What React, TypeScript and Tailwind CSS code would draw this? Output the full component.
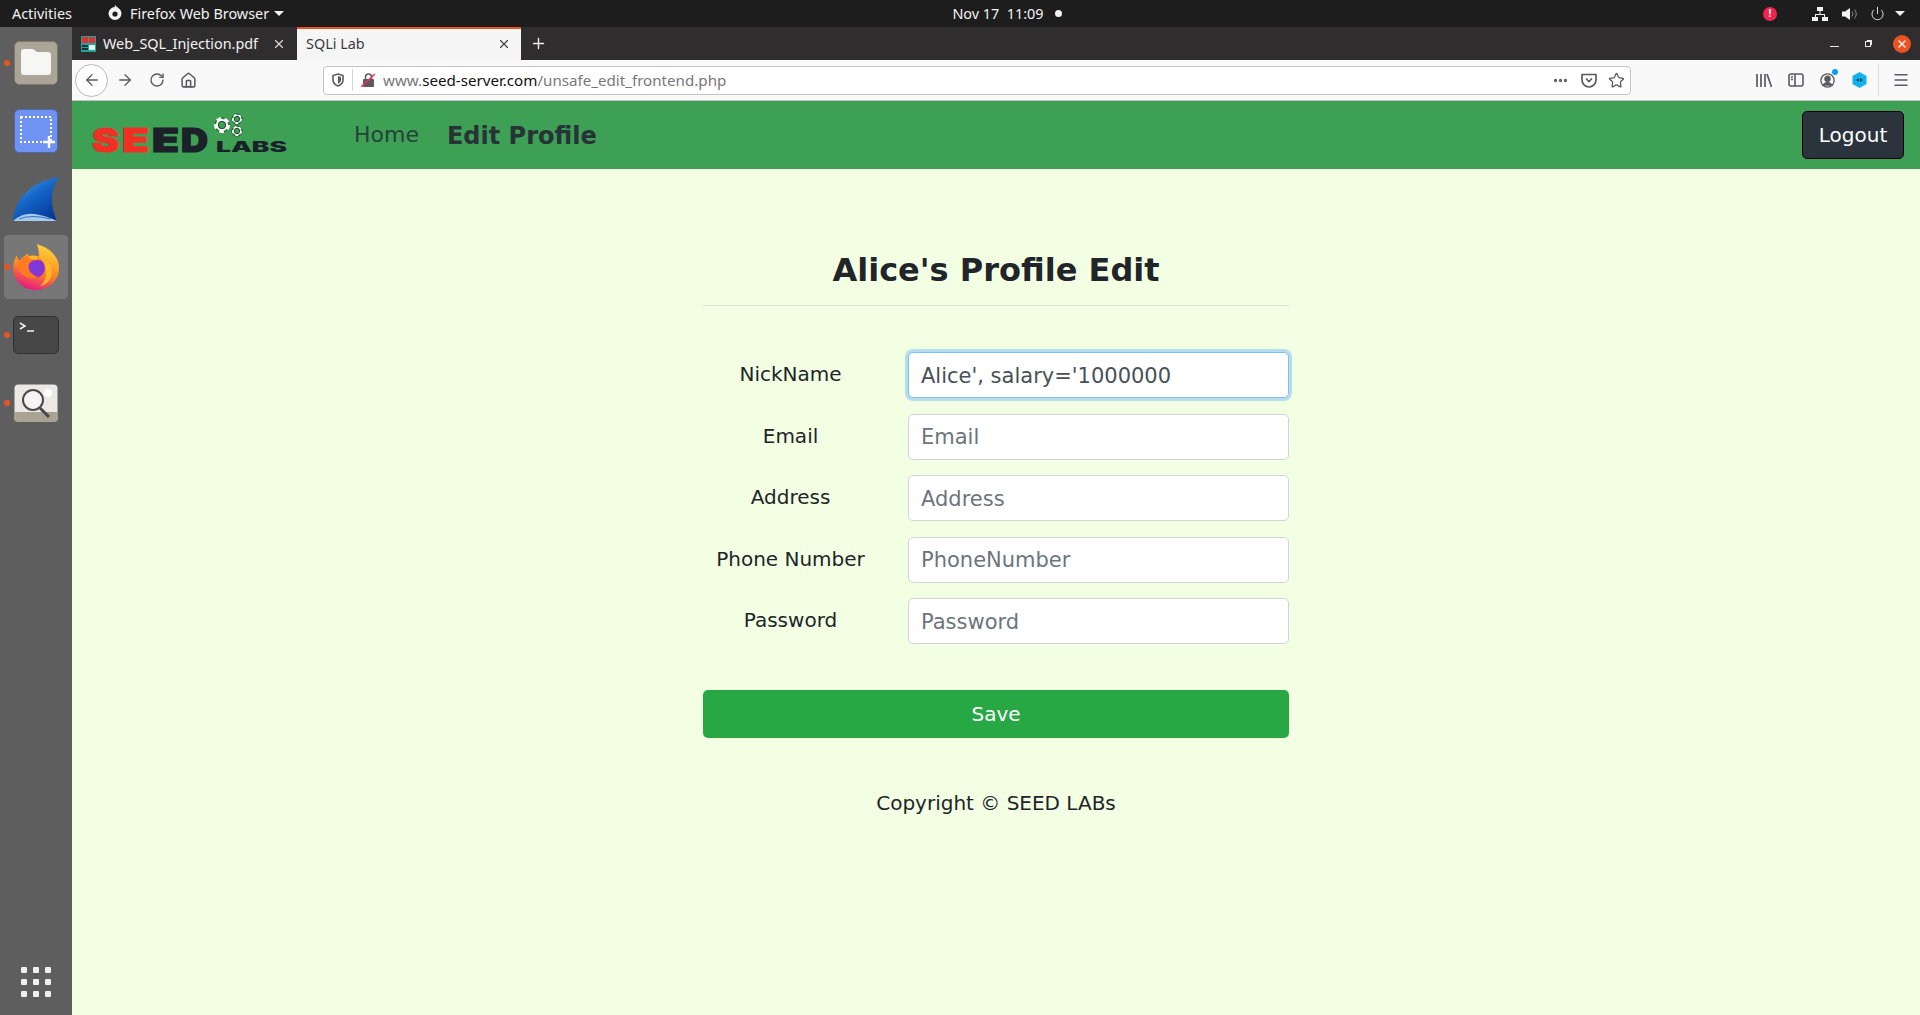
import { ArrowLeft, ArrowRight, Ellipsis, House, Menu, Plus, Power, RotateCw, Star, X } from 'lucide-react'

const dejavu = 'font-["DejaVu_Sans",sans-serif]'

const Dock = ({ dot, active, children }: { dot?: boolean; active?: boolean; children: React.ReactNode }) => (
  <div className="relative flex h-[68px] items-center justify-center">
    {active && <div className="absolute left-[4px] top-[2px] h-[64px] w-[64px] rounded bg-[#777777]" />}
    {dot && <div className="absolute left-[4px] top-[31px] h-[6px] w-[6px] rounded-full bg-[#e95420]" />}
    <div className="relative">{children}</div>
  </div>
)

const FilesIcon = () => (
  <svg width="44" height="44" viewBox="0 0 44 44" className="block">
    <rect x="0.5" y="0.5" width="43" height="43" rx="5" fill="#aba597" stroke="#7d786d" />
    <path d="M7 11q0-3 3-3h9l4 3h11q3 0 3 3v17q0 3-3 3H10q-3 0-3-3z" fill="#f7f6f4" />
  </svg>
)

const ScreenshotIcon = () => (
  <svg width="44" height="44" viewBox="0 0 44 44" className="block">
    <rect x="0.5" y="0.5" width="43" height="43" rx="5" fill="#6f93f2" stroke="#4d68ad" />
    <rect x="7" y="8" width="30" height="25" fill="none" stroke="#fff" strokeWidth="2" strokeDasharray="2 2" />
    <path d="M35 27v12M29 33h12" stroke="#fff" strokeWidth="2.400" />
  </svg>
)

const WiresharkIcon = () => (
  <svg width="46" height="46" viewBox="0 0 46 46" className="block">
    <defs>
      <linearGradient id="fin" x1="0" y1="0" x2="0.7" y2="1">
        <stop offset="0" stopColor="#5aa7ee" />
        <stop offset="0.5" stopColor="#1466c8" />
        <stop offset="1" stopColor="#063a9a" />
      </linearGradient>
    </defs>
    <path d="M0 45C1 24 18 5 46 1 37 14 37 30 44 45z" fill="url(#fin)" />
    <path d="M0 45q10-9 22-7t22 7z" fill="#a9c9ea" />
    <path d="M6 43q12-5 32 0" fill="none" stroke="#2f75c6" />
  </svg>
)

const FirefoxIcon = () => (
  <svg width="46" height="46" viewBox="0 0 46 46" className="block">
    <defs>
      <linearGradient id="ffa" x1="0.7" y1="0" x2="0.35" y2="1">
        <stop offset="0" stopColor="#ffd63c" />
        <stop offset="0.55" stopColor="#ff8a1f" />
        <stop offset="1" stopColor="#e31587" />
      </linearGradient>
      <radialGradient id="ffb" cx="0.55" cy="0.5" r="0.6">
        <stop offset="0" stopColor="#6a3fe0" />
        <stop offset="1" stopColor="#a32cc4" />
      </radialGradient>
    </defs>
    <path d="M23 46C10 46 0 36 0 24 0 19 2 14 4 11q0 4 3 6c2-4 5-6 9-7-1 2-1 3 0 4 6-2 8 0 9 1C27 9 25 4 24 0c8 3 14 6 18 12 3 4 4 8 4 12 0 12-10 22-23 22z" fill="url(#ffa)" />
    <path d="M28 12c9 4 13 13 10 21-2 5-6 8-11 9 7-5 9-17 1-30z" fill="#ffb52a" />
    <circle cx="22" cy="24" r="10" fill="url(#ffb)" />
    <path d="M6 17c3-4 8-6 13-5 4 0 8 2 10 5-5-2-11-1-13 3-2 5 2 11 9 13-7 3-15 0-18-6-2-3-2-7-1-10z" fill="#ff7b21" />
    <path d="M15 13c3-2 8-2 11 0l-3 3c-3-1-6-1-8-3z" fill="#ffb52a" />
  </svg>
)

const TerminalIcon = () => (
  <svg width="46" height="38" viewBox="0 0 46 38" className="block">
    <rect x="0.5" y="0.5" width="45" height="37" rx="5" fill="#474747" stroke="#2e2e2e" />
    <path d="M7 7l5 3-5 3" fill="none" stroke="#f2f2f2" strokeWidth="1.500" />
    <path d="M14 15h7" stroke="#f2f2f2" strokeWidth="1.500" />
  </svg>
)

const SearchIcon = () => (
  <svg width="44" height="38" viewBox="0 0 44 38" className="block">
    <rect x="0.5" y="0.5" width="43" height="37" rx="4" fill="#ece9e4" />
    <path d="M0 28h44v6q0 4-4 4H4q-4 0-4-4z" fill="#a9a393" />
    <circle cx="34" cy="9" r="4" fill="#fff" />
    <circle cx="19" cy="16" r="10" fill="#f5f4f2" stroke="#4a4a4a" strokeWidth="2" />
    <path d="M26 24l9 9" stroke="#4a4a4a" strokeWidth="3" />
  </svg>
)

const PdfFavicon = () => (
  <svg width="15" height="16" viewBox="0 0 15 16">
    <rect width="15" height="16" fill="#2aa198" />
    <rect x="1" y="1" width="6" height="6" fill="#e0312a" />
    <rect x="8" y="1" width="6" height="6" fill="#e0312a" />
    <rect x="1" y="9" width="6" height="2" fill="#17343a" />
    <rect x="8" y="9" width="6" height="5" fill="#d8f2ee" />
    <rect x="1" y="12" width="6" height="2" fill="#17343a" />
  </svg>
)

const Gear = ({ x, y, r, thick }: { x: number; y: number; r: number; thick: number }) => (
  <g>
    <circle cx={x} cy={y} r={r + 1.2} fill="none" stroke="#24282c" strokeWidth="0.6" />
    <circle cx={x} cy={y} r={r} fill="none" stroke="#fff" strokeWidth={thick} strokeDasharray={`${r * 0.7} ${r * 0.55}`} />
    <circle cx={x} cy={y} r={r - thick / 4} fill="none" stroke="#fff" strokeWidth={thick / 2} />
    <circle cx={x} cy={y} r={r - thick / 2 - 0.3} fill="none" stroke="#24282c" strokeWidth="0.8" />
  </g>
)

const seedLetters = [
  { ch: 'S', x: 0, fill: '#ee3124' },
  { ch: 'E', x: 30, fill: '#ee3124' },
  { ch: 'E', x: 60, fill: '#1b2029' },
  { ch: 'D', x: 89, fill: '#1b2029' },
]

const SeedLogo = () => (
  <svg width="200" height="50" viewBox="0 0 200 50" className="shrink-0" style={{ fontFamily: 'Inter, sans-serif' }}>
    {seedLetters.map((l, i) => (
      <text key={i} x={l.x} y="42" fill={l.fill} stroke={l.fill} strokeWidth="1.200" fontSize="33" fontWeight="900" textLength="27" lengthAdjust="spacingAndGlyphs">{l.ch}</text>
    ))}
    <text x="124" y="42" fill="#1b2029" fontSize="14" fontWeight="900" textLength="71" lengthAdjust="spacingAndGlyphs">LABS</text>
    <Gear x={130} y={15} r={6} thick={4} />
    <Gear x={145} y={9} r={4} thick={2} />
    <Gear x={145} y={21} r={4} thick={2} />
  </svg>
)

const fields = [
  { label: 'NickName', placeholder: 'NickName', value: "Alice', salary='1000000", focused: true },
  { label: 'Email', placeholder: 'Email' },
  { label: 'Address', placeholder: 'Address' },
  { label: 'Phone Number', placeholder: 'PhoneNumber' },
  { label: 'Password', placeholder: 'Password' },
]

export default function App() {
  return (
    <div className='flex h-[1015px] w-[1920px] flex-col overflow-hidden font-["Noto_Sans",sans-serif]'>
      {/* gnome top bar */}
      <div className="grid h-[27px] shrink-0 grid-cols-[1fr_auto_1fr] items-center bg-[#1d1d1d] text-[14.400px] text-[#f2f2f2]">
        <div className="flex items-center">
          <span className="ml-[12px]">Activities</span>
          <svg className="ml-[35px]" width="16" height="16" viewBox="0 0 16 16">
            <circle cx="8" cy="8.500" r="6.500" fill="#f2f2f2" />
            <circle cx="8" cy="9" r="2.600" fill="#1d1d1d" />
            <path d="M8 0l3 3-4 2z" fill="#f2f2f2" />
          </svg>
          <span className="ml-[7px]">Firefox Web Browser</span>
          <span className="ml-[5px] h-0 w-0 border-x-[5px] border-t-[5px] border-x-transparent border-t-[#f2f2f2]" />
        </div>
        <div className="flex items-center pl-[94px]">
          <span className="whitespace-pre">Nov 17  11:09</span>
          <span className="ml-[11px] h-[7px] w-[7px] rounded-full bg-[#f2f2f2]" />
        </div>
        <div className="flex items-center justify-end">
          <span className="flex h-[14px] w-[14px] items-center justify-center rounded-full bg-[#ed254e] text-[10px] font-bold text-white">!</span>
          <svg className="ml-[35px]" width="16" height="14" viewBox="0 0 16 14" fill="#f2f2f2">
            <rect x="5" y="0" width="6" height="4" />
            <rect x="0" y="10" width="6" height="4" />
            <rect x="10" y="10" width="6" height="4" />
            <path d="M7.500 4h1v3H13v3h-1V8H4v2H3V7h4.500z" />
          </svg>
          <svg className="ml-[14px]" width="16" height="14" viewBox="0 0 16 14">
            <path d="M0 4.500h3L8 1v12L3 9.500H0z" fill="#f2f2f2" />
            <path d="M10 4.500q2 2.500 0 5M12.500 2.500q3.500 4.500 0 9" fill="none" stroke="#8d8d8d" />
          </svg>
          <Power className="ml-[12px] text-[#f2f2f2]" size={15} strokeWidth={1.4} />
          <span className="ml-[10px] mr-[15px] h-0 w-0 border-x-[5px] border-t-[5px] border-x-transparent border-t-[#f2f2f2]" />
        </div>
      </div>

      <div className="flex min-h-0 flex-1">
        {/* dock */}
        <aside className="flex w-[72px] shrink-0 flex-col justify-between bg-[#5e5e5e] pt-[2px]">
          <div>
            <Dock dot><FilesIcon /></Dock>
            <Dock><ScreenshotIcon /></Dock>
            <Dock><WiresharkIcon /></Dock>
            <Dock dot active><FirefoxIcon /></Dock>
            <Dock dot><TerminalIcon /></Dock>
            <Dock dot><SearchIcon /></Dock>
          </div>
          <div className="mb-[18px] ml-[21px] grid w-[30px] grid-cols-3 gap-[6px]">
            {Array.from({ length: 9 }).map((_, i) => (
              <span key={i} className="h-[6px] w-[6px] rounded-[1px] bg-[#f0f0f0]" />
            ))}
          </div>
        </aside>

        <div className="flex min-w-0 flex-1 flex-col">
          {/* tab strip */}
          <div className="flex h-[33px] shrink-0 items-stretch bg-[#2f2d2e] text-[14.400px]">
            <div className="flex w-[225px] items-center pl-[9px] text-[#f2f2f2]">
              <PdfFavicon />
              <span className="ml-[7px]">Web_SQL_Injection.pdf</span>
              <X className="ml-auto mr-[11px] text-[#d6d6d6]" size={14} />
            </div>
            <div className="flex w-[224px] items-center border-t-2 border-[#e95420] bg-[#f5f5f5] pb-[2px] pl-[9px] text-[#3a3a3a]">
              <span>SQLi Lab</span>
              <X className="ml-auto mr-[10px] text-[#444444]" size={14} />
            </div>
            <Plus className="ml-[9px] self-center text-[#eeeeee]" size={17} />
            <div className="ml-auto flex items-center">
              <span className="mr-[26px] mt-[5px] h-[1px] w-[9px] bg-[#e8e8e8]" />
              <span className="relative mr-[22px] h-[6px] w-[6px] border border-[#e8e8e8] shadow-[1.500px_-1.500px_0_-0.500px_#e8e8e8]" />
              <span className="mr-[9px] flex h-[18px] w-[18px] items-center justify-center rounded-full bg-[#e95420]">
                <X className="text-white" size={12} strokeWidth={2.4} />
              </span>
            </div>
          </div>

          {/* toolbar */}
          <div className="flex h-[41px] shrink-0 items-center border-b border-[#c4c4c4] bg-[#f9f9f9] text-[#5b5b5f]">
            <div className="ml-[3px] flex h-[33px] w-[33px] items-center justify-center rounded-full border border-[#b9b9b9] bg-white">
              <ArrowLeft size={18} strokeWidth={1.7} />
            </div>
            <ArrowRight className="ml-[8px]" size={18} strokeWidth={1.7} />
            <RotateCw className="ml-[15px]" size={16} strokeWidth={2} />
            <House className="ml-[15px]" size={17} strokeWidth={2.2} />
            <div className="ml-[126px] flex h-[29px] w-[1308px] items-center rounded border border-[#c4c4c4] bg-white text-[15.150px]">
              <svg className="ml-[8px]" width="12" height="14" viewBox="0 0 12 14">
                <path d="M6 1l5 1.500v4.500q0 4-5 6-5-2-5-6V2.500z" fill="none" stroke="#5b5b5f" strokeWidth="1.600" />
                <path d="M6 3l3 1v3q0 2.500-3 4z" fill="#5b5b5f" />
              </svg>
              <span className="ml-[8px] h-[22px] w-px bg-[#d5d5d5]" />
              <svg className="ml-[8px]" width="14" height="14" viewBox="0 0 14 14">
                <rect x="2" y="6" width="11" height="8" rx="1" fill="#5b5b5f" />
                <path d="M4.500 6V4a3 3 0 0 1 6 0v2" fill="none" stroke="#5b5b5f" strokeWidth="1.500" />
                <path d="M0 14L14 1" stroke="#f0324e" strokeWidth="1.600" />
              </svg>
              <span className="ml-[8px] text-[#77787c]">www.</span>
              <span className="text-[#111111]">seed-server.com</span>
              <span className="text-[#77787c]">/unsafe_edit_frontend.php</span>
              <Ellipsis className="ml-auto" size={17} strokeWidth={2.6} />
              <svg className="ml-[12px]" width="16" height="15" viewBox="0 0 16 15">
                <path d="M1 1.500h14v5.500a7 7 0 0 1-14 0z" fill="none" stroke="#5b5b5f" strokeWidth="1.700" strokeLinejoin="round" />
                <path d="M5 5.500l3 3 3-3" fill="none" stroke="#5b5b5f" strokeWidth="1.700" />
              </svg>
              <Star className="ml-[11px] mr-[5px]" size={17} strokeWidth={1.8} />
            </div>
            <svg className="ml-[125px]" width="16" height="15" viewBox="0 0 16 15" fill="none" stroke="#5b5b5f" strokeWidth="1.700">
              <path d="M1 1v13M5 1v13M9 1v13M11 1l4.500 13" />
            </svg>
            <svg className="ml-[16px]" width="16" height="14" viewBox="0 0 16 14" fill="none" stroke="#5b5b5f" strokeWidth="1.600">
              <rect x="1" y="1" width="14" height="12" rx="2" />
              <path d="M7 1v12M3 4h2M3 6.500h2" />
            </svg>
            <div className="relative ml-[16px]">
              <svg className="block" width="15" height="15" viewBox="0 0 15 15" fill="none" stroke="#5b5b5f" strokeWidth="1.300">
                <circle cx="7.500" cy="7.500" r="6.600" />
                <circle cx="7.500" cy="5.800" r="2.600" fill="#5b5b5f" />
                <path d="M3 12q4.500-5 9 0z" fill="#5b5b5f" />
              </svg>
              <span className="absolute right-[-3px] top-[-4px] h-[6px] w-[6px] rounded-full bg-[#0a9dff]" />
            </div>
            <svg className="ml-[17px]" width="15" height="16" viewBox="0 0 15 16">
              <path d="M7.500 0l7 4v8l-7 4-7-4V4z" fill="#0fb1f2" />
              <path d="M4 8l3-2v4zM11 8L8 6v4z" fill="#27414f" />
            </svg>
            <span className="ml-[11px] h-[34px] w-px bg-[#dedede]" />
            <Menu className="ml-[13px]" size={18} strokeWidth={2} />
          </div>

          {/* site navbar */}
          <nav className={`flex h-[68px] shrink-0 items-center bg-[#3ea055] ${dejavu}`}>
            <div className="ml-[20px] flex"><SeedLogo /></div>
            <span className="ml-[62px] mb-[2px] text-[22px] text-[#24413a]">Home</span>
            <span className="ml-[28px] mt-[2px] text-[24px] font-bold text-[#283338]">Edit Profile</span>
            <button className="ml-auto mr-[16px] mb-[1px] h-[48px] w-[102px] rounded-[5px] border border-black bg-[#2b343d] text-[20px] text-white">Logout</button>
          </nav>

          {/* form */}
          <main className={`flex flex-1 flex-col items-center bg-[#f3ffe3] pt-[80px] text-[#212529] ${dejavu}`}>
            <div className="w-[586px]">
              <h1 className="text-center text-[32px] leading-[42px] font-bold">Alice's Profile Edit</h1>
              <hr className="mt-[14px] border-[#dbe3d4]" />
              <div className="mt-[46px] grid grid-cols-[175px_381px] gap-x-[30px] gap-y-[15.500px]">
                {fields.map(f => (
                  <div key={f.label} className="contents">
                    <label className="flex h-[46px] items-center justify-center pb-[2px] text-[20px]">{f.label}</label>
                    <input
                      readOnly
                      value={f.value ?? ''}
                      placeholder={f.placeholder}
                      className={`h-[46px] rounded-[5px] border bg-white px-[12px] pt-[1px] text-[21px] text-[#495057] outline-none placeholder:text-[#6c757d] ${f.focused ? 'border-[#80bdff] shadow-[0_0_0_3px_rgba(0,123,255,0.25)]' : 'border-[#ced4da]'}`}
                    />
                  </div>
                ))}
              </div>
              <button className="mt-[46px] h-[48px] w-full rounded-[5px] bg-[#28a745] text-[20px] text-white">Save</button>
              <p className="mt-[50px] text-center text-[20px]">Copyright © SEED LABs</p>
            </div>
          </main>
        </div>
      </div>
    </div>
  )
}
